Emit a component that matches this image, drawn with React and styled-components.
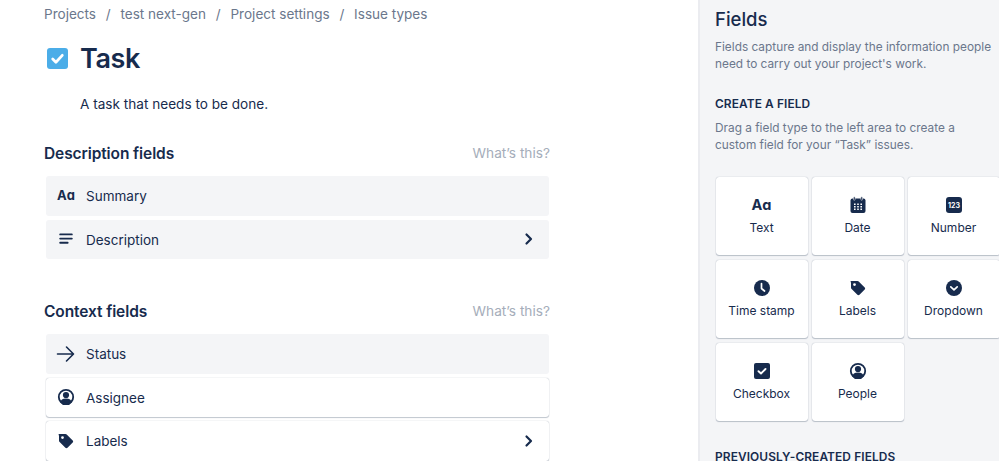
import React from "react";
import styled, { createGlobalStyle } from "styled-components";

const Global = createGlobalStyle`
  html, body { margin: 0; padding: 0; background: #fff; }
  body { width: 999px; height: 461px; overflow: hidden; font-family: Inter, "Noto Sans", sans-serif; color: #172b4d; }
`;

const Page = styled.div`
  display: flex;
  width: 999px;
  height: 461px;
  overflow: hidden;
`;

const Main = styled.main`
  width: 698px;
  flex: none;
  padding: 5px 0 0 44px;
  box-sizing: border-box;
`;

const Crumbs = styled.nav`
  display: flex;
  gap: 9.8px;
  height: 18px;
  align-items: center;
  font-size: 13.55px;
  color: #6b778c;
`;

const TitleRow = styled.div`
  display: flex;
  align-items: center;
  gap: 12px;
  margin: 15px 0 0 3px;
  height: 40px;
`;

const TaskIcon = styled.span`
  width: 21px;
  height: 21px;
  border-radius: 3px;
  background: #4bade8;
  display: flex;
  align-items: center;
  justify-content: center;
`;

const Title = styled.h1`
  margin: 0;
  font-size: 27px;
  font-weight: 600;
  letter-spacing: -0.4px;
`;

const Lead = styled.p`
  margin: 16px 0 0 36px;
  font-size: 13.6px;
  line-height: 20px;
`;

const SectionHead = styled.div`
  width: 506px;
  display: flex;
  justify-content: space-between;
  align-items: center;
  height: 20px;
  margin-top: ${(p) => p.$top}px;
`;

const SectionTitle = styled.h2`
  margin: 0;
  font-size: 15.5px;
  font-weight: 600;
  letter-spacing: -0.1px;
`;

const Help = styled.span`
  font-size: 13.7px;
  color: #a5adba;
`;

const Rows = styled.div`
  display: flex;
  flex-direction: column;
  gap: 4px;
  margin: 13px 0 0 2px;
  width: 503px;
`;

const Row = styled.div`
  height: 39.5px;
  flex: none;
  box-sizing: border-box;
  display: flex;
  align-items: center;
  padding: 0 10px 0 10px;
  border-radius: 3px;
  font-size: 13.5px;
  background: ${(p) => (p.$raised ? "#fff" : "#f4f5f7")};
  box-shadow: ${(p) => (p.$raised ? "0 0 1px rgba(9,30,66,.4), 0 1px 1px rgba(9,30,66,.22)" : "none")};
`;

const RowIcon = styled.span`
  width: 20px;
  height: 20px;
  margin-right: 10px;
  display: flex;
  align-items: center;
  justify-content: center;
`;

const RowLabel = styled.span`
  flex: 1;
  margin-top: 1px;
`;

const Panel = styled.aside`
  flex: 1;
  background: #f4f5f7;
  border-left: 2px solid #ebecf0;
  padding: 6px 0 0 15px;
  min-width: 0;
  overflow: hidden;
`;

const PanelTitle = styled.h2`
  margin: 0;
  font-size: 18.5px;
  font-weight: 500;
  line-height: 26px;
`;

const PanelText = styled.p`
  margin: ${(p) => p.$top}px 0 0;
  font-size: 11.85px;
  line-height: 17px;
  color: #6b778c;
  width: 282px;
`;

const Caps = styled.h3`
  margin: ${(p) => p.$top}px 0 0;
  font-size: 11.9px;
  font-weight: 600;
  line-height: 16px;
  letter-spacing: 0.1px;
  white-space: nowrap;
`;

const Grid = styled.div`
  display: grid;
  grid-template-columns: repeat(3, 92px);
  grid-auto-rows: 78px;
  gap: 5px 4px;
  margin: 23px 0 0 0.5px;
`;

const Card = styled.div`
  background: #fff;
  border-radius: 3px;
  box-shadow: 0 0 1px rgba(9, 30, 66, 0.4), 0 1px 1px rgba(9, 30, 66, 0.22);
  display: flex;
  flex-direction: column;
  align-items: center;
  padding-top: 18px;
  box-sizing: border-box;
  font-size: 12px;
`;

const CardIcon = styled.span`
  width: 20px;
  height: 20px;
  display: flex;
  align-items: center;
  justify-content: center;
  margin-bottom: 5px;
`;

const AaGlyph = styled.span`
  font-size: ${(p) => p.$size}px;
  font-weight: 700;
  letter-spacing: 0;
  line-height: 1;
  white-space: nowrap;
`;

const NAVY = "#172b4d";

const Svg = ({ size = 20, children }) => (
  <svg width={size} height={size} viewBox="0 0 24 24" fill="none">
    {children}
  </svg>
);

const Lines = () => (
  <Svg>
    <path d="M5 6.5h14M5 11.5h14M5 16.5h9" stroke={NAVY} strokeWidth="2.2" strokeLinecap="round" />
  </Svg>
);

const Arrow = () => (
  <svg width="20" height="20" viewBox="0 0 20 20" fill="none">
    <path d="M1.5 10h15.5M10.5 3l7 7-7 7" stroke={NAVY} strokeWidth="1.6" strokeLinecap="round" strokeLinejoin="round" />
  </svg>
);

const Person = ({ size = 20 }) => (
  <svg width={size} height={size} viewBox="0 0 20 20">
    <circle cx="10" cy="10" r="7.200" fill="none" stroke={NAVY} strokeWidth="1.800" />
    <circle cx="10" cy="8" r="3.100" fill={NAVY} />
    <path d="M4.500 15.500c0-2.800 2-4.100 5.500-4.100s5.500 1.300 5.500 4.100l-2.500 2.500h-6z" fill={NAVY} />
  </svg>
);

const Tag = ({ size = 20 }) => (
  <svg width={size} height={size} viewBox="0 0 20 20">
    <path
      fillRule="evenodd"
      d="M3.500 3h6c.5 0 .9.2 1.200.5l6 6c.6.6.6 1.500 0 2.100l-5.200 5.200c-.6.6-1.500.6-2.100 0l-6-6c-.3-.3-.4-.7-.4-1.200V4.500C2 3.700 2.700 3 3.500 3zM6.500 5.200a1.400 1.400 0 1 0 0 2.800 1.400 1.400 0 0 0 0-2.800z"
      fill={NAVY}
    />
  </svg>
);

const Chevron = () => (
  <svg width="20" height="20" viewBox="0 0 20 20" fill="none">
    <path d="M7.500 5.500l4.500 4.500-4.500 4.500" stroke={NAVY} strokeWidth="2.200" strokeLinecap="round" strokeLinejoin="round" />
  </svg>
);

const Calendar = () => (
  <svg width="20" height="20" viewBox="0 0 20 20">
    <rect x="2.500" y="3.500" width="15" height="14.500" rx="2" fill={NAVY} />
    <rect x="5.500" y="1.800" width="1.600" height="3.500" rx=".8" fill={NAVY} stroke="#fff" strokeWidth=".5" />
    <rect x="12.900" y="1.800" width="1.600" height="3.500" rx=".8" fill={NAVY} stroke="#fff" strokeWidth=".5" />
    {[8.500, 11, 13.500].map((y) =>
      [6, 9.200, 12.400].map((x) => <rect key={`${x}-${y}`} x={x} y={y} width="1.600" height="1.500" fill="#fff" />)
    )}
  </svg>
);

const NumberIcon = () => (
  <svg width="20" height="20" viewBox="0 0 20 20">
    <rect x="2" y="2" width="16" height="16" rx="3" fill={NAVY} />
    <text x="10" y="12.800" textAnchor="middle" fontSize="7" fontWeight="700" fontFamily="Inter, sans-serif" fill="#fff">
      123
    </text>
  </svg>
);

const Clock = () => (
  <svg width="20" height="20" viewBox="0 0 20 20">
    <circle cx="10" cy="10" r="8" fill={NAVY} />
    <path d="M9.500 5.500v5l3 2.500" stroke="#fff" strokeWidth="1.700" fill="none" strokeLinecap="round" strokeLinejoin="round" />
  </svg>
);

const Dropdown = () => (
  <svg width="20" height="20" viewBox="0 0 20 20">
    <circle cx="10" cy="10" r="8" fill={NAVY} />
    <path d="M6.800 8.800L10 11.800l3.200-3" stroke="#fff" strokeWidth="1.700" fill="none" strokeLinecap="round" strokeLinejoin="round" />
  </svg>
);

const CheckIcon = () => (
  <svg width="20" height="20" viewBox="0 0 20 20">
    <rect x="2" y="2" width="16" height="16" rx="2" fill={NAVY} />
    <path d="M6.500 10.200l2.500 2.300 4.500-4.500" stroke="#fff" strokeWidth="1.900" fill="none" strokeLinecap="round" strokeLinejoin="round" />
  </svg>
);

const cards = [
  { label: "Text", icon: <AaGlyph $size={14.5}>Aɑ</AaGlyph> },
  { label: "Date", icon: <Calendar /> },
  { label: "Number", icon: <NumberIcon /> },
  { label: "Time stamp", icon: <Clock /> },
  { label: "Labels", icon: <Tag /> },
  { label: "Dropdown", icon: <Dropdown /> },
  { label: "Checkbox", icon: <CheckIcon /> },
  { label: "People", icon: <Person /> },
];

const App = () => (
  <Page>
    <Global />
    <Main>
      <Crumbs>
        <span>Projects</span>
        <span>/</span>
        <span>test next-gen</span>
        <span>/</span>
        <span>Project settings</span>
        <span>/</span>
        <span>Issue types</span>
      </Crumbs>
      <TitleRow>
        <TaskIcon>
          <svg width="17" height="17" viewBox="0 0 16 16" fill="none">
            <path d="M3.500 8.500l3 3 6-6.500" stroke="#fff" strokeWidth="2.600" strokeLinecap="round" strokeLinejoin="round" />
          </svg>
        </TaskIcon>
        <Title>Task</Title>
      </TitleRow>
      <Lead>A task that needs to be done.</Lead>

      <SectionHead $top={29}>
        <SectionTitle>Description fields</SectionTitle>
        <Help>What’s this?</Help>
      </SectionHead>
      <Rows>
        <Row>
          <RowIcon><AaGlyph $size={13}>Aɑ</AaGlyph></RowIcon>
          <RowLabel>Summary</RowLabel>
        </Row>
        <Row>
          <RowIcon><Lines /></RowIcon>
          <RowLabel>Description</RowLabel>
          <Chevron />
        </Row>
      </Rows>

      <SectionHead $top={42}>
        <SectionTitle>Context fields</SectionTitle>
        <Help>What’s this?</Help>
      </SectionHead>
      <Rows>
        <Row>
          <RowIcon><Arrow /></RowIcon>
          <RowLabel>Status</RowLabel>
        </Row>
        <Row $raised>
          <RowIcon><Person /></RowIcon>
          <RowLabel>Assignee</RowLabel>
        </Row>
        <Row $raised>
          <RowIcon><Tag /></RowIcon>
          <RowLabel>Labels</RowLabel>
          <Chevron />
        </Row>
      </Rows>
    </Main>

    <Panel>
      <PanelTitle>Fields</PanelTitle>
      <PanelText $top={7}>
        Fields capture and display the information people need to carry out your project's work.
      </PanelText>
      <Caps $top={23}>CREATE A FIELD</Caps>
      <PanelText $top={8}>
        Drag a field type to the left area to create a custom field for your “Task” issues.
      </PanelText>
      <Grid>
        {cards.map((c) => (
          <Card key={c.label}>
            <CardIcon>{c.icon}</CardIcon>
            {c.label}
          </Card>
        ))}
      </Grid>
      <Caps $top={28}>PREVIOUSLY-CREATED FIELDS</Caps>
    </Panel>
  </Page>
);

export default App;
